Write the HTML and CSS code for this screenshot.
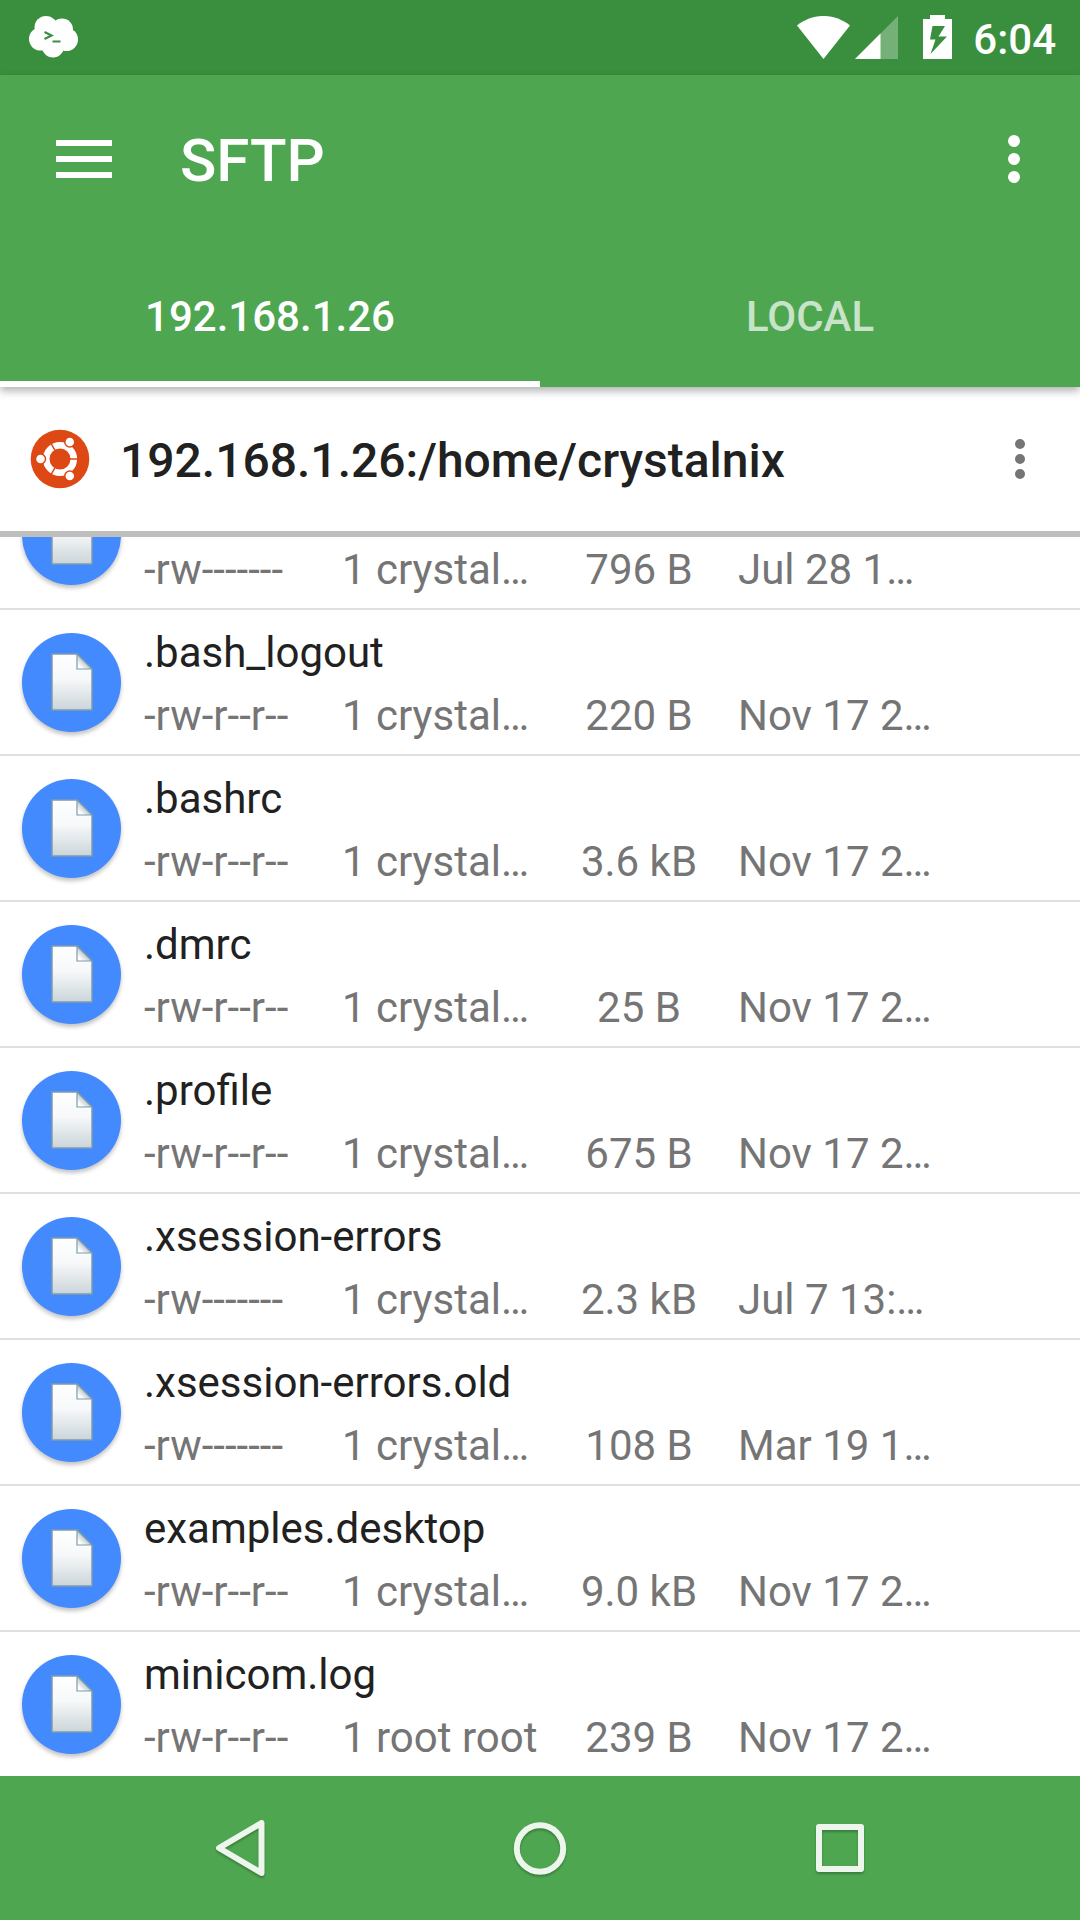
FILE: index.html
```html
<!DOCTYPE html>
<html lang="en">
<head>
<meta charset="utf-8">
<meta name="viewport" content="width=device-width, initial-scale=1">
<title>SFTP</title>
<link rel="stylesheet" href="styles.css">
</head>
<body>
<svg class="defs" aria-hidden="true">
  <defs>
    <linearGradient id="paper" x1="0" y1="0" x2="0" y2="1">
      <stop offset="0" stop-color="#fff"/>
      <stop offset=".45" stop-color="#f6f8f9"/>
      <stop offset="1" stop-color="#cbd5da"/>
    </linearGradient>
    <linearGradient id="fold" x1=".6" y1=".4" x2="0" y2="1">
      <stop offset="0" stop-color="#a9b8c1"/>
      <stop offset=".7" stop-color="#fff"/>
    </linearGradient>
    <symbol id="file" viewBox="0 0 42 58">
      <path d="M1 1H26L41 16V57H1Z" fill="url(#paper)" stroke="#7d9cab" stroke-width="1.5"/>
      <path d="M26 1V16H41Z" fill="url(#fold)" stroke="#7d9cab" stroke-width="1.2"/>
    </symbol>
  </defs>
</svg>
<div class="screen">
  <div class="status">
    <svg class="cloud" viewBox="0 0 50 42" width="50" height="42" aria-hidden="true">
      <g fill="#fff"><circle cx="18" cy="11.500" r="11.500"/><circle cx="34" cy="13.500" r="11"/><circle cx="12.500" cy="23" r="11.500"/><circle cx="38.500" cy="23.500" r="11.500"/><circle cx="25" cy="30.500" r="11"/><circle cx="25" cy="21" r="12"/></g>
      <path d="M16.500 16L23.500 19.500L16.500 23M24.500 25.500H32.500" fill="none" stroke="#398f3d" stroke-width="2.200"/>
    </svg>
    <div class="indicators">
      <svg class="wifi" viewBox="0 0 53 43" width="53" height="43" aria-hidden="true"><path d="M26.500 43L0 9.500C16-3.200 37-3.200 53 9.500Z" fill="#fff"/></svg>
      <svg class="signal" viewBox="0 0 43 43" width="43" height="43" aria-hidden="true"><path d="M43 0V43H0Z" fill="#fff" opacity=".3"/><path d="M25.500 17.500V43H0Z" fill="#fff"/></svg>
      <svg class="battery" viewBox="0 0 29 44" width="29" height="44" aria-hidden="true"><path fill="#fff" fill-rule="evenodd" d="M7 0H22V4H29V44H0V4H7ZM9.500 11L7 24.500H12.500L7.500 39L24 21.500H15.500L22 11Z"/></svg>
      <time class="clock">6:04</time>
    </div>
  </div>
  <header class="header">
    <div class="appbar">
      <button class="icon-button" aria-label="Open menu">
        <svg viewBox="0 0 56 38" width="56" height="38" fill="#fff"><path d="M0 0H56V6H0ZM0 16H56V22H0ZM0 32H56V38H0Z"/></svg>
      </button>
      <h1 class="title">SFTP</h1>
      <button class="icon-button" aria-label="More options">
        <svg viewBox="0 0 12 48" width="12" height="48" fill="#fff"><circle cx="6" cy="6" r="6"/><circle cx="6" cy="24" r="6"/><circle cx="6" cy="42" r="6"/></svg>
      </button>
    </div>
    <div class="tabs" role="tablist">
      <button class="tab tab-active" role="tab" aria-selected="true">192.168.1.26</button>
      <button class="tab" role="tab" aria-selected="false">LOCAL</button>
    </div>
  </header>
  <div class="pathbar">
    <svg class="distro" viewBox="-30 -30 60 60" width="60" height="60" aria-hidden="true">
      <circle r="29.300" fill="#dd4814"/>
      <circle r="13.800" fill="none" stroke="#fff" stroke-width="6.600"/>
      <path d="M10 0H18M-5 -8.700L-9 -15.600M-5 8.700L-9 15.600" stroke="#dd4814" stroke-width="1.500"/>
      <g fill="#fff" stroke="#dd4814" stroke-width="1.500"><circle cx="-19.500" cy="0" r="5"/><circle cx="9.800" cy="-17" r="5"/><circle cx="9.800" cy="17" r="5"/></g>
    </svg>
    <h2 class="path">192.168.1.26:/home/crystalnix</h2>
    <button class="icon-button" aria-label="Folder options">
      <svg viewBox="0 0 10 40" width="10" height="40" fill="#757575"><circle cx="5" cy="5" r="5"/><circle cx="5" cy="20" r="5"/><circle cx="5" cy="35" r="5"/></svg>
    </button>
  </div>
  <ul class="files">
    <li class="file file-scrolled"><span class="badge"><svg width="42" height="58"><use href="#file"/></svg></span><div class="info"><div class="meta"><span>-rw-------</span><span>1 crystal…</span><span class="size">796 B</span><span>Jul 28 1…</span></div></div></li>
    <li class="file"><span class="badge"><svg width="42" height="58"><use href="#file"/></svg></span><div class="info"><div class="name">.bash_logout</div><div class="meta"><span>-rw-r--r--</span><span>1 crystal…</span><span class="size">220 B</span><span>Nov 17 2…</span></div></div></li>
    <li class="file"><span class="badge"><svg width="42" height="58"><use href="#file"/></svg></span><div class="info"><div class="name">.bashrc</div><div class="meta"><span>-rw-r--r--</span><span>1 crystal…</span><span class="size">3.6 kB</span><span>Nov 17 2…</span></div></div></li>
    <li class="file"><span class="badge"><svg width="42" height="58"><use href="#file"/></svg></span><div class="info"><div class="name">.dmrc</div><div class="meta"><span>-rw-r--r--</span><span>1 crystal…</span><span class="size">25 B</span><span>Nov 17 2…</span></div></div></li>
    <li class="file"><span class="badge"><svg width="42" height="58"><use href="#file"/></svg></span><div class="info"><div class="name">.profile</div><div class="meta"><span>-rw-r--r--</span><span>1 crystal…</span><span class="size">675 B</span><span>Nov 17 2…</span></div></div></li>
    <li class="file"><span class="badge"><svg width="42" height="58"><use href="#file"/></svg></span><div class="info"><div class="name">.xsession-errors</div><div class="meta"><span>-rw-------</span><span>1 crystal…</span><span class="size">2.3 kB</span><span>Jul 7 13:…</span></div></div></li>
    <li class="file"><span class="badge"><svg width="42" height="58"><use href="#file"/></svg></span><div class="info"><div class="name">.xsession-errors.old</div><div class="meta"><span>-rw-------</span><span>1 crystal…</span><span class="size">108 B</span><span>Mar 19 1…</span></div></div></li>
    <li class="file"><span class="badge"><svg width="42" height="58"><use href="#file"/></svg></span><div class="info"><div class="name">examples.desktop</div><div class="meta"><span>-rw-r--r--</span><span>1 crystal…</span><span class="size">9.0 kB</span><span>Nov 17 2…</span></div></div></li>
    <li class="file"><span class="badge"><svg width="42" height="58"><use href="#file"/></svg></span><div class="info"><div class="name">minicom.log</div><div class="meta"><span>-rw-r--r--</span><span>1 root root</span><span class="size">239 B</span><span>Nov 17 2…</span></div></div></li>
  </ul>
  <nav class="navbar" aria-label="System">
    <button class="nav-button" aria-label="Back">
      <svg viewBox="0 0 60 60" width="60" height="60"><path d="M9 30L51.500 5V55Z"/></svg>
    </button>
    <button class="nav-button" aria-label="Home">
      <svg viewBox="0 0 60 60" width="60" height="60"><circle cx="30" cy="30.500" r="23.200"/></svg>
    </button>
    <button class="nav-button" aria-label="Recent apps">
      <svg viewBox="0 0 60 60" width="60" height="60"><path d="M9 9H51V51H9Z"/></svg>
    </button>
  </nav>
</div>
</body>
</html>
```
FILE: styles.css
```css
* { box-sizing: border-box; }

body {
  margin: 0;
  background: #fff;
  color: #212121;
  font-family: Roboto, "Noto Sans", sans-serif;
  font-size: 42px;
  line-height: 50px;
}

button {
  padding: 0;
  border: 0;
  background: none;
  color: inherit;
  font: inherit;
}

svg { display: block; }

.defs { position: absolute; width: 0; height: 0; }

.screen {
  display: flex;
  flex-direction: column;
  min-height: 100vh;
}

.status {
  display: flex;
  align-items: center;
  justify-content: space-between;
  height: 75px;
  padding: 0 24px 1px 28px;
  background: #398f3d;
  color: #fff;
}

.indicators { display: flex; align-items: center; }
.wifi { margin-right: 5px; }
.signal { margin-right: 25px; }
.battery { margin-right: 21px; }
.clock { font-weight: 500; padding-top: 5px; }

.header {
  position: relative;
  background: #4ea750;
  color: #fff;
  box-shadow: 0 4px 8px rgba(0, 0, 0, .3);
}

.appbar {
  display: flex;
  align-items: center;
  height: 168px;
  padding: 0 36px 0 54px;
}

.icon-button {
  display: flex;
  align-items: center;
  justify-content: center;
  min-width: 60px;
  height: 96px;
}

.title {
  flex: 1;
  margin: 0 0 0 66px;
  padding-top: 4px;
  font-size: 60px;
  font-weight: 500;
  line-height: 72px;
}

.tabs { display: flex; }

.tab {
  flex: 1;
  height: 144px;
  padding-top: 4px;
  font-weight: 500;
  color: rgba(255, 255, 255, .7);
}

.tab-active {
  color: #fff;
  box-shadow: inset 0 -6px #fff;
}

.pathbar {
  display: flex;
  align-items: center;
  height: 150px;
  padding: 0 30px;
  border-bottom: 6px solid #bfbfbf;
}

.path {
  flex: 1;
  margin: 0 0 0 30px;
  padding-top: 4px;
  font-size: 48px;
  font-weight: 500;
  line-height: 58px;
}

.files {
  flex: 1;
  margin: 0;
  padding: 0;
  list-style: none;
}

.file {
  display: flex;
  align-items: center;
  gap: 23px;
  height: 146px;
  padding: 0 22px;
  border-bottom: 2px solid #e0e0e0;
}

.file:last-child { height: 144px; border-bottom: 0; }

/* Row partly scrolled under the path bar */
.file-scrolled {
  align-items: flex-end;
  height: 73px;
  padding-bottom: 23px;
  overflow: hidden;
}

.badge {
  display: flex;
  flex: none;
  align-items: center;
  justify-content: center;
  width: 99px;
  height: 99px;
  border-radius: 50%;
  background: #448aff;
  box-shadow: 0 3px 4px rgba(0, 0, 0, .24);
}

.info { flex: 1; padding-top: 4px; }
.file-scrolled .info { margin-bottom: -10px; }
.name { margin-bottom: 13px; }

.meta {
  display: grid;
  grid-template-columns: 198px 198px 198px 1fr;
  color: #757575;
  white-space: nowrap;
}

.size { text-align: center; }

.navbar {
  display: flex;
  height: 144px;
  padding: 0 8.333%;
  background: #4ea750;
}

.nav-button {
  display: flex;
  flex: 1;
  align-items: center;
  justify-content: center;
}

.nav-button svg {
  fill: none;
  stroke: #edf6ed;
  stroke-width: 6;
  stroke-linejoin: round;
  filter: drop-shadow(0 2px 1px rgba(0, 0, 0, .25));
  overflow: visible;
}
```
